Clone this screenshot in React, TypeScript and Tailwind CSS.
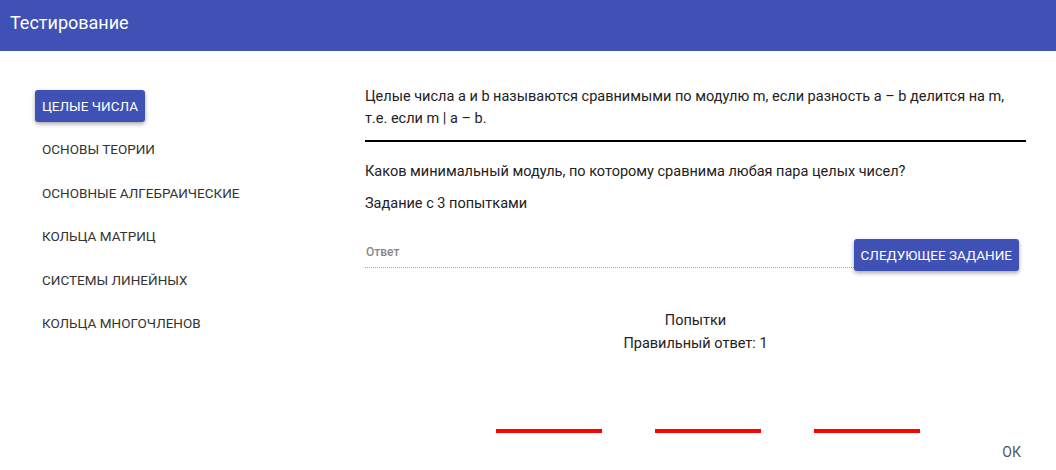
import React from "react";

const topics = [
  "ОСНОВЫ ТЕОРИИ",
  "ОСНОВНЫЕ АЛГЕБРАИЧЕСКИЕ",
  "КОЛЬЦА МАТРИЦ",
  "СИСТЕМЫ ЛИНЕЙНЫХ",
  "КОЛЬЦА МНОГОЧЛЕНОВ",
];

export default function App() {
  return (
    <div className="w-[1056px] h-[470px] bg-white overflow-hidden font-['Roboto',sans-serif] text-[#222]">
      {/* Top bar */}
      <header className="h-[51px] bg-[#3f51b5] flex items-center px-[10px]">
        <h1 className="text-white text-[18px] leading-none -mt-[6px]">Тестирование</h1>
      </header>

      <div className="flex">
        {/* Left: topics */}
        <nav className="w-[365px] shrink-0 pl-[35px] pt-[39px] flex flex-col gap-[11.5px]">
          <button className="self-start h-[32px] px-[7px] bg-[#3f51b5] text-white text-[13.5px] rounded-[3px] shadow-[0_2px_4px_rgba(0,0,0,0.35)]">
            ЦЕЛЫЕ ЧИСЛА
          </button>
          {topics.map((t) => (
            <button key={t} className="self-start h-[32px] px-[7px] text-[13.5px] text-[#333]">
              {t}
            </button>
          ))}
        </nav>

        {/* Right: task */}
        <main className="w-[661px] shrink-0 pt-[35px] text-[14.5px]">
          <p className="leading-[22px] pb-[10px] border-b-2 border-black">
            Целые числа a и b называются сравнимыми по модулю m, если разность a – b делится на m,
            т.е. если m | a – b.
          </p>
          <p className="leading-[22px] mt-[19px]">
            Каков минимальный модуль, по которому сравнима любая пара целых чисел?
          </p>
          <p className="leading-[22px] mt-[10px]">Задание с 3 попытками</p>

          <div className="flex items-end mt-[24px]">
            <div className="flex-1 flex flex-col border-b border-dotted border-[#aaa] pb-[9px]">
              <span className="text-[12px] font-medium text-[#888] leading-none pl-[1px]">Ответ</span>
            </div>
            <button className="mb-[-3px] mr-[7px] h-[32px] px-[7px] bg-[#3f51b5] text-white text-[13.5px] rounded-[3px] shadow-[0_2px_4px_rgba(0,0,0,0.35)]">
              СЛЕДУЮЩЕЕ ЗАДАНИЕ
            </button>
          </div>

          <div className="flex flex-col items-center mt-[41px] leading-[23px]">
            <span>Попытки</span>
            <span>Правильный ответ: 1</span>
          </div>

          <div className="flex gap-[53px] pl-[131px] mt-[74px]">
            <div className="w-[106px] h-[4px] bg-[#f00]" />
            <div className="w-[106px] h-[4px] bg-[#f00]" />
            <div className="w-[106px] h-[4px] bg-[#f00]" />
          </div>

          <div className="flex justify-end pr-[5px] mt-[11px]">
            <span className="text-[14px] text-[#555] leading-[16px]">ОК</span>
          </div>
        </main>
      </div>
    </div>
  );
}
